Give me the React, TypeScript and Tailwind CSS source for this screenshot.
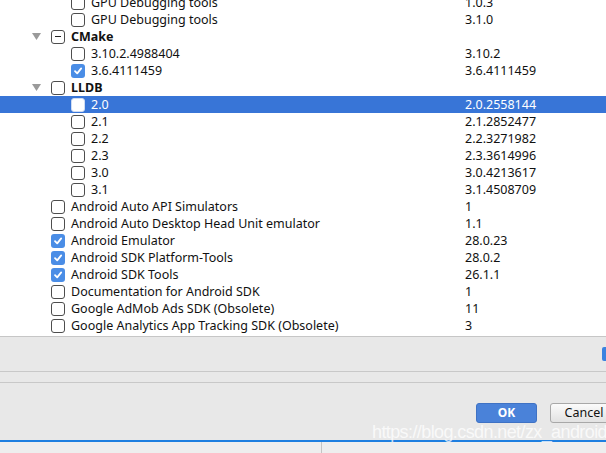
import React from "react";

type Row = {
  level: 1 | 2;
  label: string;
  version?: string;
  state?: "none" | "checked" | "partial";
  header?: boolean;
  selected?: boolean;
};

const rows: Row[] = [
  { level: 2, label: "GPU Debugging tools", version: "1.0.3" },
  { level: 2, label: "GPU Debugging tools", version: "3.1.0" },
  { level: 1, label: "CMake", header: true, state: "partial" },
  { level: 2, label: "3.10.2.4988404", version: "3.10.2" },
  { level: 2, label: "3.6.4111459", version: "3.6.4111459", state: "checked" },
  { level: 1, label: "LLDB", header: true },
  { level: 2, label: "2.0", version: "2.0.2558144", selected: true },
  { level: 2, label: "2.1", version: "2.1.2852477" },
  { level: 2, label: "2.2", version: "2.2.3271982" },
  { level: 2, label: "2.3", version: "2.3.3614996" },
  { level: 2, label: "3.0", version: "3.0.4213617" },
  { level: 2, label: "3.1", version: "3.1.4508709" },
  { level: 1, label: "Android Auto API Simulators", version: "1" },
  { level: 1, label: "Android Auto Desktop Head Unit emulator", version: "1.1" },
  { level: 1, label: "Android Emulator", version: "28.0.23", state: "checked" },
  { level: 1, label: "Android SDK Platform-Tools", version: "28.0.2", state: "checked" },
  { level: 1, label: "Android SDK Tools", version: "26.1.1", state: "checked" },
  { level: 1, label: "Documentation for Android SDK", version: "1" },
  { level: 1, label: "Google AdMob Ads SDK (Obsolete)", version: "11" },
  { level: 1, label: "Google Analytics App Tracking SDK (Obsolete)", version: "3" },
  { level: 1, label: "Google Play APK Expansion library", version: "1" },
];

function Box({ state, selected }: { state?: Row["state"]; selected?: boolean }) {
  if (state === "checked") {
    return (
      <div className="w-[14px] h-[14px] rounded-[3px] bg-[#4a8de6] flex items-center justify-center shrink-0">
        <svg width="10" height="10" viewBox="0 0 10 10">
          <path d="M2 5.2 L4.2 7.4 L8.2 2.4" stroke="white" strokeWidth="1.8" fill="none" strokeLinecap="round" strokeLinejoin="round" />
        </svg>
      </div>
    );
  }
  return (
    <div
      className={`w-[14px] h-[14px] rounded-[3px] border flex items-center justify-center shrink-0 bg-white ${
        selected ? "border-[#cfdcf2]" : "border-[#4d4d4d]"
      }`}
    >
      {state === "partial" && <div className="w-[6px] h-[1.5px] bg-[#222]" />}
    </div>
  );
}

export default function App() {
  return (
    <div
      className="w-[606px] h-[453px] overflow-hidden bg-white flex flex-col text-[12.5px] text-[#111]"
      style={{ fontFamily: '"Noto Sans", "Noto Sans CJK SC", sans-serif' }}
    >
      <div className="h-[336px] overflow-hidden shrink-0">
        <div className="mt-[-6px] flex flex-col">
          {rows.map((r, i) => (
            <div
              key={i}
              className={`h-[17px] flex items-center shrink-0 ${r.selected ? "bg-[#3875d7] text-white" : ""}`}
            >
              <div className={`flex items-center ${r.level === 1 ? "w-[51px]" : "w-[71px]"} shrink-0`}>
                {r.header && (
                  <svg className="ml-[32px]" width="9" height="7" viewBox="0 0 9 7">
                    <path d="M0 0 H9 L4.5 7 Z" fill="#9a9a9a" />
                  </svg>
                )}
              </div>
              <Box state={r.state} selected={r.selected} />
              <span
                className={`ml-[6px] pt-[2px] whitespace-nowrap leading-none ${r.header ? "font-bold" : ""} ${
                  r.level === 1 ? "w-[394px]" : "w-[374px]"
                }`}
              >
                {r.label}
              </span>
              <span className="pt-[2px] whitespace-nowrap leading-none">{r.version}</span>
            </div>
          ))}
        </div>
      </div>
      <div className="border-t border-[#c6c6c6] bg-[#e8e8e8] flex flex-col h-[104px] shrink-0">
        <div className="h-[34px] flex items-start justify-end pt-[10px]">
          <div className="w-[4px] h-[14px] bg-[#3b82e0] rounded-l-[2px]" />
        </div>
        <div className="border-t border-[#c8c8c8] h-[11px]" />
        <div className="border-t border-[#c8c8c8] flex-1 relative">
          <div className="flex justify-end gap-[13px] pt-[20px] -mr-[12px]">
            <button className="w-[61px] h-[20px] rounded-[3px] bg-[#4a82d9] border border-[#3f72c4] text-white font-bold text-[12px] leading-none">
              OK
            </button>
            <button className="w-[68px] h-[20px] rounded-[3px] bg-gradient-to-b from-[#fbfbfb] to-[#e2e2e2] border border-[#a8a8a8] text-[#111] text-[12.5px] leading-none">
              Cancel
            </button>
          </div>
          <div
            className="absolute left-[372px] top-[40px] text-[18px] leading-none text-white/75 tracking-[-0.6px] whitespace-nowrap"
            style={{ fontFamily: '"Liberation Sans", sans-serif' }}
          >
            https://blog.csdn.net/zx_android
          </div>
        </div>
      </div>
      <div className="border-t-2 border-[#1e7fe0] flex-1 bg-[#eeeeee] flex">
        <div className="w-[322px] border-r border-[#c4c4c4]" />
      </div>
    </div>
  );
}
